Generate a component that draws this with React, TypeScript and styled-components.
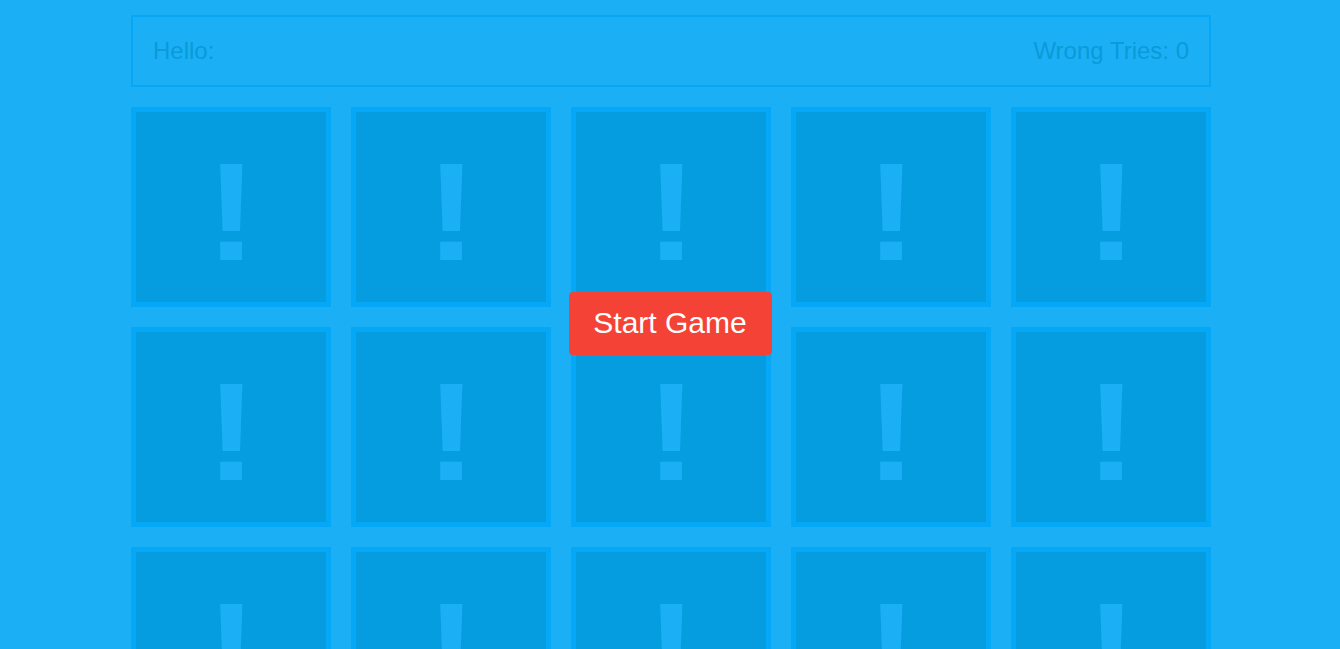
import React from "react";
import styled, { createGlobalStyle } from "styled-components";

const Global = createGlobalStyle`
  html, body {
    margin: 0;
    padding: 0;
    background: #1bb0f6;
    overflow: hidden;
  }
  body {
    font-family: "Liberation Sans", Arial, sans-serif;
  }
`;

const Page = styled.main`
  width: 1080px;
  margin: 0 auto;
  padding-top: 15px;
  transform: translateX(1px);
  display: flex;
  flex-direction: column;
  gap: 20px;
`;

const Header = styled.header`
  height: 72px;
  box-sizing: border-box;
  border: 2px solid #08a7f5;
  padding: 0 20px;
  display: flex;
  align-items: center;
  justify-content: space-between;
  font-size: 24px;
  color: #0a9ad8;
`;

const Board = styled.section`
  display: grid;
  grid-template-columns: repeat(5, 200px);
  grid-auto-rows: 200px;
  gap: 20px;
`;

const Card = styled.div`
  box-sizing: border-box;
  border: 5px solid #05a8f7;
  background: #069de0;
  display: flex;
  align-items: center;
  justify-content: center;
`;

const Mark = styled.span`
  font-family: "Liberation Sans", Arial, sans-serif;
  font-weight: 700;
  font-size: 140px;
  line-height: 1;
  color: #1bb0f6;
  margin-top: 9px;
  transform: scaleX(1.1);
  display: block;
`;

const Overlay = styled.div`
  position: fixed;
  inset: 0;
  display: flex;
  align-items: center;
  justify-content: center;
`;

const StartButton = styled.button`
  font-family: "Liberation Sans", Arial, sans-serif;
  font-size: 30px;
  color: #ffffff;
  background: #f44336;
  border: none;
  border-radius: 4px;
  width: 203px;
  height: 63px;
  padding: 0;
  margin-bottom: 3px;
  cursor: pointer;
`;

export default function App() {
  const cards = Array.from({ length: 20 }, (_, i) => i);
  return (
    <>
      <Global />
      <Page>
        <Header>
          <span>Hello:</span>
          <span>Wrong Tries: 0</span>
        </Header>
        <Board>
          {cards.map((i) => (
            <Card key={i}>
              <Mark>!</Mark>
            </Card>
          ))}
        </Board>
      </Page>
      <Overlay>
        <StartButton>Start Game</StartButton>
      </Overlay>
    </>
  );
}
